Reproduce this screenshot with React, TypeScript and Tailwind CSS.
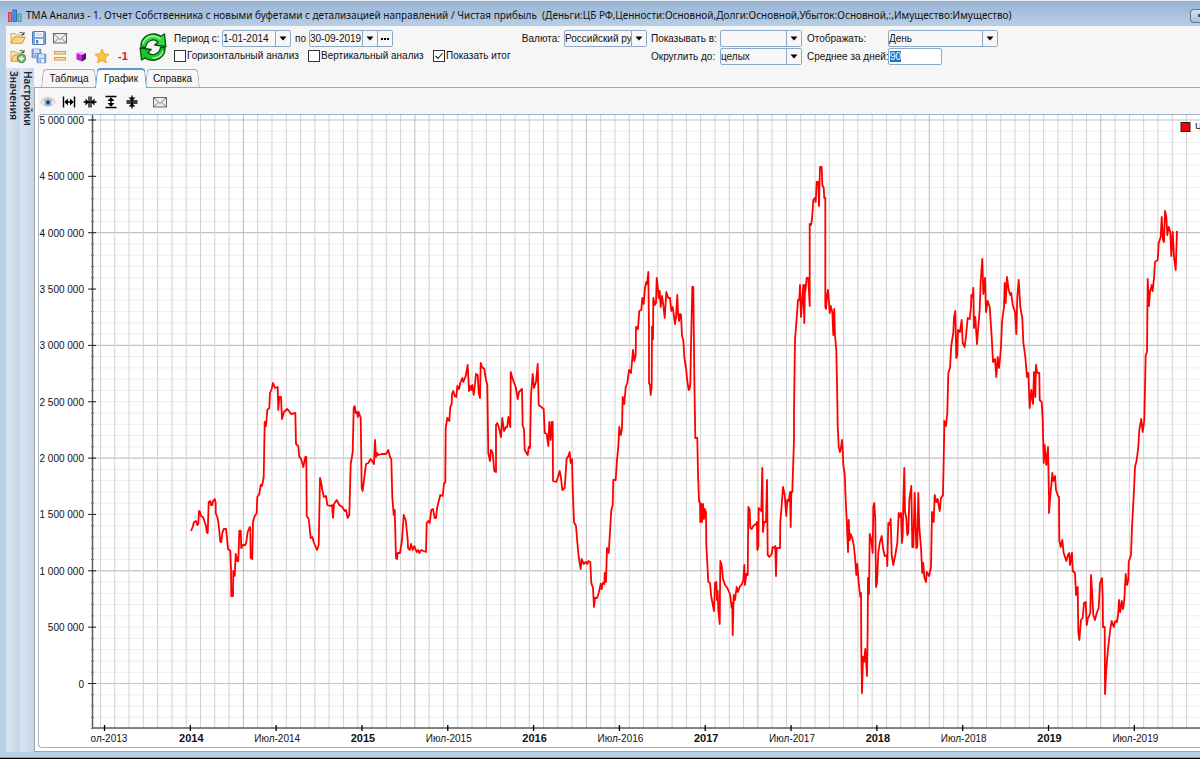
import { useEffect, useRef } from "react";
import type { ReactNode } from "react";

const PROFIT_LINE = `
191,531 192.7,527 194,522 196,521 197.3,525 198.3,524 199,511 200,512 201,516 203,517 204.7,522 206,526 206.7,532 207.7,533
208.7,502 210.3,501 211,505 212.3,505 213,501 214.7,499 215.7,503 215.7,513 217.3,517 218.3,522 219.3,531 220.3,542 221.3,542
222.3,533 223.7,529 226,529 227,538 228,549 230.3,551 231,570 231.3,596 233,596 233.3,571 234.7,576 235.7,554 237.3,561
238.3,561 239.3,531 240.7,531 241.3,548 242.7,545 245.3,545 246.3,542 247.7,532 249.7,527 250.3,528 250.7,558 252.3,559
253,522 254.3,517 256.7,513 257.3,497 259.3,494 260.7,485 262,486 263.7,477 264.7,422 266,426 267.3,410 269.3,408 270,393
271.7,389 273,383 275,388 277.7,387 278.3,410 279.3,397 281,397 282,419 284,412 287,409 289,411 291,414 295.3,413 296,444
298.3,446 299.3,457 300.7,458 301.7,461 303.3,467 305.3,457 306.3,457 306.7,516 308.7,519 310.7,538 312.3,537 314,543 317,550
318.7,545 320,478 321,482 322.3,490 324,497 326,496 327.3,505 330,506 332,505 333,518 334,504 336.7,500 339.3,505 342.3,507
344.7,511 346,510 347.7,518 349.3,515 350.7,464 352.7,452 353.7,408 354.7,406 355.7,413 357,412 357.7,417 358.7,412 360.7,418
361.7,488 362.7,491 364,480 366,464 368.3,463 370.7,459 372.3,461 374,464 375,440 376,457 377.3,453 378.3,455 381.7,454 386,454
388.3,450 390,457 391.3,459 392.3,497 393.7,515 394.7,510 396,558 397,559 397.7,553 400,553 402,540 403.7,515 405.7,520
407.7,540 408,548 409.7,550 411,544 412.7,550 414.3,546 416.7,552 418.3,550 419.3,553 421.3,550 423.7,551 426,552 426.7,523
428.3,521 429.7,523 431.3,510 433,509 434.7,518 436,518 437.3,507 440.3,495 442.7,496 444,484 445.3,482 445.7,428 447.3,418
449.3,421 450.3,407 451.7,404 452,394 453.3,391 454.7,396 456.3,397 457.3,386 459,389 460.3,383 462.3,378 463.3,382 465.7,376
467.7,365 469,391 470.3,386 471.3,390 472.3,385 473.7,395 474.7,387 476,374 477.7,375 478.7,393 480,398 480.7,363 482,367
484.3,369 486,380 487.3,385 488.3,453 490,461 491,450 492.7,453 494.3,471 496,472 496,425 497.3,423 499,428 501,437 502.3,418
504,431 506,427 507.3,427 508.3,417 510.3,427 510.7,372 513,380 515.7,387 517.7,399 519,392 522,389 522.7,426 524,429 524.7,450
527.7,455 528.7,447 530,448 531,395 532.7,374 534,388 536,382 537.7,364 538.7,405 541.3,407 543.7,409 544.7,433 546.7,434
548.3,446 549.3,422 550.7,440 551.7,422 552.7,422 553,481 556.3,482 557.7,478 559.7,471 561,478 562.3,490 564.7,488 566.7,458
568,457 569.7,452 570.7,463 572,459 572.7,488 574,522 576,526 577.3,542 578.7,557 580.7,569 581.7,559 583.7,564 585.7,562
587.3,564 588.3,561 590.3,562 591.3,583 593,588 594,607 595,598 597,598 598.7,593 600.7,584 601.7,589 602.7,583 604.3,584
604.7,573 606,582 607,548 608.7,553 610,532 611.3,510 612.7,505 613.3,480 615.7,480 617,460 618.3,447 619.3,427 620.7,435
622,428 622.7,397 624.3,404 625.7,387 627.3,383 629,370 631,373 633,350 634.3,361 635.7,355 636,327 638,329 639.3,311 641.3,310
642.3,298 643.7,304 645,288 646.3,282 647,284 648.3,272 649,327 649,383 650,385 650.7,395 651.7,387 652,327 653,339 653.3,298
654.7,305 656,303 656.7,278 657.7,286 658.7,298 659.7,291 660.7,307 662,296 663.3,305 664.7,318 666.3,292 668.3,298 670,298
671.3,311 672.7,307 675,324 676,317 677.3,295 678,313 679,321 680,314 681,315 682,336 683.3,340 684.3,357 686,368 687.3,381
688.7,390 689.7,388 690.3,384 691,347 692.3,287 693.3,287 694.3,377 695.3,438 697.3,438 698,473 699,501 700,503 700.3,522
701.3,504 702,522 703,504 704,519 704.7,509 706,512 706.3,545 707.3,563 708.3,582 710,583 711.3,597 712.3,602 714,611 715,583
716.3,582 717,600 717.7,591 718.3,610 719.7,624 720.3,561 721.7,565 723,579 725,585 727.3,588 730,594 731.7,608 732.3,603
732.7,635 733.7,595 735,600 736.7,587 738,592 739.7,587 742,584 743.3,580 744.3,565 745,585 746.3,574 747.7,575 748.3,507
749.7,510 750.3,528 751.7,529 753.3,526 756,524 757,522 757.3,550 758.3,547 758.7,508 761.3,511 762.3,468 763,532 764,522
766,522 767,480 767.7,555 769.3,557 771.7,554 772.7,547 774.7,548 775.3,546 776,576 776.7,548 780,548 780.3,522 781.7,505
783,487 784.7,495 786.3,516 787.3,500 788.7,501 790,492 790.7,527 791.3,492 792.3,492 793,470 794,440 794,412 795,340
796.3,323 798,300 799.3,300 800,285 801,317 802,303 803.3,285 804.3,323 805,285 805.3,292 806.7,278 808.3,278 809.7,306
809.7,224 811,225 812,219 813.3,200 814.7,198 815.7,202 816.7,182 818.3,182 819,206 820,167 821.7,167 822.3,185 823.7,188
824.3,198 825.3,198 825.3,307 826,309 827,295 828,290 829,303 829.7,313 830.7,306 832.3,312 833.3,335 834.3,309 835,335
836.3,350 837,383 837.7,425 838.7,447 840,452 841.3,446 842,440 842.7,450 843.3,465 844.7,474 846,507 846.7,520 848,552
848.7,520 849.7,540 850.7,534 852.3,538 853.7,545 855,557 856.3,575 857.3,564 858.7,583 860.3,597 861,593 861.3,650 862,693
863,657 864,662 865.3,649 867,676 867.7,627 868,578 869,594 869.7,534 871,538 872.7,553 873.3,507 874.3,503 875.3,520 876,587
877,583 878.3,553 879.7,543 881.7,536 883,548 884.7,556 886.7,555 887.3,566 888.3,523 889.7,525 890.7,519 891.7,555 893.3,565
895.3,555 897.3,543 898.7,513 900,517 901,513 902,543 902.7,535 903.3,503 904.3,468 905,512 906.3,518 907.3,535 908.3,533
909.3,500 911.3,486 912.3,547 913.3,547 914.7,493 916.3,548 917.3,547 918.3,493 919.3,527 921,548 922.3,573 923.3,563 924.3,577
926,582 926.7,572 929,576 931,567 932,512 933.7,522 934.7,495 936.3,502 937.7,499 939.7,511 941,498 943,495 944.3,428
944.3,421 946,426 947.3,413 948.3,373 950,368 951.3,345 953.3,333 954,317 955.3,311 956.3,358 957.3,355 958,330 960,332
961.7,320 962.7,343 964.7,347 966.3,333 967.7,318 969.7,319 971,307 971.3,295 972.7,297 973.3,288 974,328 975.3,317 977,344
978.7,322 979.7,310 980.7,281 982.3,259 983.3,294 985,278 986,312 987.7,301 989.7,307 990.7,322 991.7,337 993,362 995,359
996.3,377 997.7,357 999,368 999.7,362 1001,347 1002,322 1004,307 1004.7,283 1005.7,303 1007,277 1008.7,290 1010.3,295
1011.3,293 1012.7,305 1015,312 1016.3,334 1017.3,297 1018.7,280 1020.3,307 1022.3,318 1023.3,342 1025.3,357 1027,377 1028.3,373
1029.7,408 1031.3,390 1033,404 1034,372 1035.3,397 1036,365 1037,372 1038,373 1039.3,373 1039.7,400 1041.7,402 1042.7,420
1043.7,463 1044.7,445 1046.3,465 1048,447 1049,498 1049,513 1050,500 1051.3,485 1052.3,473 1053.3,481 1055,476 1056,490
1058,496 1059,497 1059.3,540 1060.7,547 1062.3,540 1063.7,553 1066.3,561 1068,555 1069.3,553 1070,565 1072,553 1072.7,571
1075,573 1076,595 1077.7,587 1078.3,632 1079.3,640 1081,620 1082.7,618 1084,603 1085.7,602 1086.7,625 1087.7,619 1090.3,613
1091,575 1092,590 1093.3,615 1095,620 1096.7,613 1098.7,608 1100,583 1102,578 1102.7,597 1103,627 1104.7,627 1105,694
1106.3,670 1107.7,652 1109,640 1110.3,629 1111.7,621 1113.7,627 1115.3,621 1117,622 1118.3,613 1119,600 1120.3,612 1121.7,601
1123,609 1124.3,600 1125.7,574 1127,585 1128.3,580 1128.7,562 1131,555 1132,527 1133.7,496 1135,467 1136.7,460 1138.3,447
1139.3,430 1141.3,419 1142.7,432 1144.3,420 1145.7,355 1147,352 1147.7,279 1149,306 1150,292 1151.7,285 1152.7,291 1154,278
1155,262 1157.7,260 1158.7,243 1160.7,237 1161.7,217 1163,240 1164,242 1165,211 1166.3,217 1167.3,235 1168.7,227 1170.3,232
1171.3,256 1172.7,232 1174,257 1175.7,270 1176.7,240 1177,231`;

const Y_LABELS = [
  "5 000 000",
  "4 500 000",
  "4 000 000",
  "3 500 000",
  "3 000 000",
  "2 500 000",
  "2 000 000",
  "1 500 000",
  "1 000 000",
  "500 000",
  "0",
];

const X_LABELS = [
  "ол-2013",
  "2014",
  "Июл-2014",
  "2015",
  "Июл-2015",
  "2016",
  "Июл-2016",
  "2017",
  "Июл-2017",
  "2018",
  "Июл-2018",
  "2019",
  "Июл-2019",
];

const monthLines = Array.from({ length: 77 }, (_, i) => ({
  x: 100.5 + i * 14.29,
  strong: i % 12 === 10,
}));
const valueLines = Array.from({ length: 55 }, (_, i) => ({
  y: 120 + i * 11.27,
  strong: i % 10 === 0,
}));

function Chart() {
  return (
    <svg className="block h-[632px] w-full" role="img" aria-label="Чистая прибыль">
      {/* the drawing keeps window coordinates, shifted into the frame */}
      <g transform="translate(-39 -115)">
        {valueLines.map((line) => (
          <line
            key={line.y}
            x1="92"
            x2="3000"
            y1={line.y}
            y2={line.y}
            stroke={line.strong ? "#c2c2c2" : "#eeeeee"}
            strokeWidth={line.strong ? 1.2 : 1}
          />
        ))}
        {monthLines.map((line) => (
          <line
            key={line.x}
            x1={line.x}
            x2={line.x}
            y1="115"
            y2="728"
            stroke={line.strong ? "#bcbcbc" : "#d2d2d2"}
          />
        ))}
        <path d="M92.500 115V728H3000" fill="none" stroke="#5c5c5c" strokeWidth="1.5" />
        {valueLines.map((line) => (
          <line key={line.y} x1="91" x2="94" y1={line.y} y2={line.y} stroke="#777777" />
        ))}
        {Y_LABELS.map((label, i) => (
          <g key={label}>
            <line x1="88" x2="96" y1={120 + i * 56.35} y2={120 + i * 56.35} stroke="#222222" />
            <text x="84" y={124 + i * 56.35} textAnchor="end" fontSize="10" fill="#111111">
              {label}
            </text>
          </g>
        ))}
        {X_LABELS.map((label, i) => {
          const isYear = i % 2 === 1;
          const x = 104.5 + i * 85.82;
          return (
            <g key={label}>
              <line x1={x} x2={x} y1="725" y2="731" stroke="#000000" strokeWidth="1.3" />
              <text
                x={i === 0 ? 109 : x + 1}
                y="742"
                textAnchor="middle"
                fontSize={isYear ? 11 : 10}
                fontWeight={isYear ? 700 : 400}
                fill="#111111"
              >
                {label}
              </text>
            </g>
          );
        })}
        <polyline
          points={PROFIT_LINE}
          fill="none"
          stroke="#ff0000"
          strokeWidth="1.8"
          strokeLinejoin="round"
        />
        <rect x="1181" y="122.5" width="9" height="9" fill="#fb0007" stroke="#222222" />
        <text x="1195" y="131" fontSize="10" fill="#222222">
          Ч
        </text>
      </g>
    </svg>
  );
}

function Icon({ children }: { children: ReactNode }) {
  return (
    <svg viewBox="0 0 16 16" className="size-4" fill="none" aria-hidden="true">
      {children}
    </svg>
  );
}

function FolderShape() {
  return (
    <>
      <path d="M1 13V3.5h4l1 1.5h6.500v2" fill="#f9e9bb" stroke="#c79a4c" strokeWidth=".8" />
      <path d="M1 13.300 4 7h11.300l-3 6.300z" fill="#fdd581" stroke="#c48a30" strokeWidth=".8" />
      <path d="M9.500 3c2-1.500 3-.5 4 1M14 2v2.500h-2.500" stroke="#333333" strokeWidth=".9" />
    </>
  );
}

function MailIcon() {
  return (
    <Icon>
      <rect x="1.500" y="3.500" width="13" height="9.500" fill="#ededed" stroke="#666666" />
      <path d="m2 4 6 5.500L14 4M2 12.500 6.500 8.500M14 12.500 9.500 8.500" stroke="#777777" strokeWidth=".9" />
    </Icon>
  );
}

function DiskShape() {
  return (
    <>
      <rect x="1.500" y="1.500" width="13" height="13" rx="1" fill="#7ba6e0" stroke="#4a78bd" />
      <rect x="4" y="2" width="8" height="5" fill="#f4f8fd" />
      <path d="M5 3.700h6M5 5.400h6" stroke="#a9c4e8" strokeWidth=".7" />
      <rect x="4" y="9" width="8" height="5" fill="#f4f8fd" />
      <rect x="5.200" y="10" width="2" height="3.500" fill="#4a78bd" />
    </>
  );
}

const toolbarIcons: { label: string; column?: string; icon: ReactNode }[] = [
  {
    label: "Открыть",
    icon: (
      <Icon>
        <FolderShape />
      </Icon>
    ),
  },
  {
    label: "Сохранить",
    icon: (
      <Icon>
        <DiskShape />
      </Icon>
    ),
  },
  { label: "Отправить", icon: <MailIcon /> },
  {
    label: "Добавить",
    column: "col-start-1",
    icon: (
      <Icon>
        <FolderShape />
        <circle cx="11.500" cy="10.500" r="4.200" fill="#6fb968" stroke="#3d7f3c" strokeWidth=".8" />
        <path d="M11.500 8v5M9 10.500h5" stroke="#ffffff" strokeWidth="1.500" />
      </Icon>
    ),
  },
  {
    label: "Сохранить все",
    icon: (
      <Icon>
        <g transform="translate(0 0) scale(.68)">
          <DiskShape />
        </g>
        <g transform="translate(5 5) scale(.68)">
          <DiskShape />
        </g>
      </Icon>
    ),
  },
  {
    label: "Строки",
    icon: (
      <Icon>
        <rect x="2.500" y="3.500" width="11" height="2.500" fill="#fde3a5" stroke="#d79a2b" />
        <rect x="2.500" y="9.500" width="11" height="2.500" fill="#fde3a5" stroke="#d79a2b" />
      </Icon>
    ),
  },
  {
    label: "Куб",
    icon: (
      <Icon>
        <path d="M3.500 5 8 3.500 13 5 9 7z" fill="#e9b4f3" />
        <path d="M3.500 5 9 7v6.500l-5.500-2z" fill="#c61fe0" />
        <path d="M9 7l4-2v6l-4 2.500z" fill="#5d0a73" />
      </Icon>
    ),
  },
  {
    label: "Избранное",
    icon: (
      <Icon>
        <path
          d="m8 1 2.100 4.700 5 .6-3.700 3.500 1 5.200L8 12.500 3.600 15l1-5.200L.9 6.300l5-.6z"
          fill="#f9c340"
          stroke="#dfa12a"
          strokeWidth=".8"
        />
      </Icon>
    ),
  },
  { label: "Минус один", icon: <span className="text-[11px] leading-4 font-bold text-[#ee1111]">-1</span> },
];

function RefreshIcon() {
  return (
    <svg viewBox="0 0 28 30" className="h-[30px] w-7" aria-hidden="true">
      <g stroke="#064d0c" strokeWidth="1.300" strokeLinejoin="round">
        <path
          d="M2 15C1.500 7 8 1.500 15.500 2c2.500.200 4.500 1 6.200 2.300L25.500 2l1.300 12.500-11-1.500 3.200-3c-2-2-5-2.500-7.500-1.500C8.500 9.700 7 12 6.500 15.500z"
          fill="#2fdc3e"
        />
        <path
          d="M26 15.500c.5 8-6 13.200-13.500 12.700-2.500-.200-4.500-1-6.200-2.300L2.500 28 1.200 16l11 1.500-3.200 3c2 2 5 2.500 7.500 1.500 3-1.200 4.500-3.500 5-6.500z"
          fill="#1cc72c"
        />
      </g>
      <path
        d="M4 11.500C5.500 6.500 10 3.700 15 4.200c2.500.200 4.500 1 6.500 2.800M24 19c-1.500 4.500-5.500 7.300-10.500 7"
        fill="none"
        stroke="#9df59c"
        strokeWidth="1.500"
      />
    </svg>
  );
}

function DownArrow() {
  return (
    <svg viewBox="0 0 8 5" className="h-[5px] w-2" aria-hidden="true">
      <path d="M.5.500h7L4 4.500z" fill="#000000" />
    </svg>
  );
}

function SelectBox({ id, value, width }: { id: string; value: string; width: string }) {
  return (
    <div className={`relative h-[17px] shrink-0 rounded-xs border border-[#8ea9c6] bg-[#f7f7f7] ${width}`}>
      <select id={id} className="block h-full w-full appearance-none overflow-hidden pr-[15px] leading-[15px] outline-none">
        <option>{value}</option>
      </select>
      <span className="pointer-events-none absolute inset-y-0 right-0 flex w-[15px] items-center justify-center border-l border-[#8ea9c6] bg-[#f7f7f7]">
        <DownArrow />
      </span>
    </div>
  );
}

function DateBox({ id, value, more }: { id: string; value: string; more?: boolean }) {
  return (
    <div className="flex h-[17px] rounded-xs border border-[#8ea9c6] bg-[#f7f7f7]">
      <input id={id} defaultValue={value} className="w-[52px] outline-none" />
      <button aria-label="Календарь" className="flex w-[15px] items-center justify-center border-l border-[#8ea9c6]">
        <DownArrow />
      </button>
      {more && (
        <button
          aria-label="Выбрать период"
          className="flex w-[15px] items-center justify-center gap-px border-l border-[#8ea9c6]"
        >
          <span className="size-[2px] bg-black" />
          <span className="size-[2px] bg-black" />
          <span className="size-[2px] bg-black" />
        </button>
      )}
    </div>
  );
}

function Check({ label, width, checked }: { label: string; width?: string; checked?: boolean }) {
  return (
    <label className={`flex items-center gap-px whitespace-nowrap ${width ?? ""}`}>
      <span className="relative size-3 shrink-0">
        <input
          type="checkbox"
          defaultChecked={checked}
          className="peer block size-3 appearance-none border border-[#333333] bg-white"
        />
        <svg viewBox="0 0 12 12" className="pointer-events-none absolute inset-0 hidden peer-checked:block" aria-hidden="true">
          <path d="m2.500 6 2.500 2.500L9.500 3" fill="none" stroke="#222222" strokeWidth="1.100" />
        </svg>
      </span>
      {label}
    </label>
  );
}

function Toolbar() {
  const daysRef = useRef<HTMLInputElement>(null);

  useEffect(() => {
    daysRef.current?.focus();
    daysRef.current?.select();
  }, []);

  return (
    <div className="flex h-[42px] items-start bg-[#f6f6f6] pt-1 pl-1">
      <div className="grid shrink-0 grid-cols-[repeat(6,16px)] gap-x-[5px] gap-y-[2px]">
        {toolbarIcons.map((item) => (
          <button key={item.label} aria-label={item.label} className={`size-4 ${item.column ?? ""}`}>
            {item.icon}
          </button>
        ))}
      </div>
      <button aria-label="Обновить" className="mt-[2px] ml-2 shrink-0">
        <RefreshIcon />
      </button>

      <div className="ml-[7px] w-[346px] shrink-0">
        <div className="flex h-[17px] items-center">
          <label htmlFor="from" className="w-12">
            Период с:
          </label>
          <DateBox id="from" value="1-01-2014" />
          <label htmlFor="to" className="w-[18px] pl-1">
            по
          </label>
          <DateBox id="to" value="30-09-2019" more />
        </div>
        <div className="flex h-[17px] items-center">
          <Check label="Горизонтальный анализ" width="w-[134px]" />
          <Check label="Вертикальный анализ" width="w-[125px]" />
          <Check label="Показать итог" checked />
        </div>
      </div>

      <div className="flex items-center">
        <label htmlFor="currency" className="w-11 text-right whitespace-nowrap pr-1">
          Валюта:
        </label>
        <SelectBox id="currency" value="Российский рубль" width="w-[83px]" />
      </div>

      <div className="ml-1 grid grid-cols-[69px_83px] items-center gap-y-px">
        <label htmlFor="units" className="whitespace-nowrap">
          Показывать в:
        </label>
        <SelectBox id="units" value="" width="w-[82px]" />
        <label htmlFor="round" className="whitespace-nowrap">
          Округлить до:
        </label>
        <SelectBox id="round" value="целых" width="w-[82px]" />
      </div>

      <div className="ml-1 grid grid-cols-[81px_110px] items-center gap-y-px">
        <label htmlFor="step">Отображать:</label>
        <SelectBox id="step" value="День" width="w-[110px]" />
        <label htmlFor="days" className="whitespace-nowrap">
          Среднее за дней:
        </label>
        <input
          id="days"
          ref={daysRef}
          defaultValue="90"
          className="h-[17px] w-[54px] rounded-xs border border-[#8ea9c6] bg-white pl-px caret-transparent outline-none selection:bg-[#0b78d7] selection:text-white"
        />
      </div>
    </div>
  );
}

function Tab({ label, width, active }: { label: string; width: string; active?: boolean }) {
  const edge = active
    ? "z-10 -mb-px h-5 before:border-t-2 before:border-[#5b96d6] before:bg-[#fcfcfc] after:border-t-2 after:border-[#5b96d6] after:bg-[#fcfcfc]"
    : "h-[18px] before:border-[#a9a9a9] before:bg-[#f6f6f6] after:border-[#a9a9a9] after:bg-[#f6f6f6]";

  return (
    <button
      role="tab"
      aria-selected={!!active}
      className={`relative before:absolute before:inset-y-0 before:left-0 before:w-3/5 before:-skew-x-6 before:rounded-tl-sm before:border-t before:border-l after:absolute after:inset-y-0 after:right-0 after:w-3/5 after:skew-x-6 after:rounded-tr-sm after:border-t after:border-r ${edge} ${width}`}
    >
      <span className="relative z-10">{label}</span>
    </button>
  );
}

const chartTools: { label: string; icon: ReactNode }[] = [
  {
    label: "Вид",
    icon: (
      <Icon>
        <path d="M1 8.500C4 4 12 4 15 8.500 12 13 4 13 1 8.500z" fill="#fdf6f0" stroke="#e0b49c" />
        <circle cx="8" cy="8.300" r="3.600" fill="#78a9e3" />
        <circle cx="8" cy="8.300" r="1.600" fill="#16315c" />
        <path d="M1.500 6.500C5 2.500 11 2.500 14.500 6.500" stroke="#e3b79f" />
      </Icon>
    ),
  },
  {
    label: "Растянуть по горизонтали",
    icon: (
      <Icon>
        <path d="M2.500 2.500v11M13.500 2.500v11M4 8h8" stroke="#000000" strokeWidth="1.400" />
        <path d="M7 4.500v7L3.300 8zM9 4.500v7L12.700 8z" fill="#000000" />
      </Icon>
    ),
  },
  {
    label: "Сжать по горизонтали",
    icon: (
      <Icon>
        <path d="M7 2.500v11M9 2.500v11M1.500 8h13" stroke="#000000" strokeWidth="1.300" />
        <path d="M3.500 4.500v7L7 8zM12.500 4.500v7L9 8z" fill="#000000" />
      </Icon>
    ),
  },
  {
    label: "Растянуть по вертикали",
    icon: (
      <Icon>
        <path d="M2.500 2.500h11M2.500 13.500h11M8 4v8" stroke="#000000" strokeWidth="1.400" />
        <path d="M4.500 7h7L8 3.300zM4.500 9h7L8 12.700z" fill="#000000" />
      </Icon>
    ),
  },
  {
    label: "Сжать по вертикали",
    icon: (
      <Icon>
        <path d="M2.500 7h11M2.500 9h11M8 1.500v13" stroke="#000000" strokeWidth="1.300" />
        <path d="M4.500 3.500h7L8 7zM4.500 12.500h7L8 9z" fill="#000000" />
      </Icon>
    ),
  },
];

function SidePanel() {
  return (
    <div className="flex w-7 shrink-0 text-[10px] font-semibold text-[#1a2433] [font-family:'Noto_Sans',sans-serif]">
      {["Значения", "Настройки"].map((label) => (
        <button
          key={label}
          className="flex w-[14px] items-center justify-start bg-linear-to-r from-[#dae5f1] to-[#c6d5e6] pt-[3px] pl-[2px] leading-[12px] [writing-mode:vertical-rl]"
        >
          {label}
        </button>
      ))}
    </div>
  );
}

export default function App() {
  return (
    <div className="flex min-h-screen flex-col overflow-hidden border-b border-black bg-[#b9d0e9] text-[10px] leading-[15px] text-[#111111] [font-family:'Liberation_Sans',sans-serif]">
      <header className="flex h-[26px] items-center border-t border-[#e6edf5] bg-linear-to-b from-[#98b4d2] to-[#b8cfe8] pt-1 pl-2">
        <svg viewBox="0 0 14 14" className="size-[14px] shrink-0" aria-hidden="true">
          <rect x=".5" y="3.500" width="3" height="9" fill="#ef6a78" stroke="#c8303f" strokeWidth=".8" />
          <rect x="5" y="1" width="3.500" height="11.500" fill="#4e8ff0" stroke="#1f56b8" strokeWidth=".8" />
          <rect x="10" y="5" width="3" height="7.500" fill="#7fc7a8" stroke="#2f8b75" strokeWidth=".8" />
        </svg>
        <h1 className="ml-1 flex-1 truncate text-[10px] whitespace-pre [font-family:'Noto_Sans',sans-serif]">
          {
            "ТМА Анализ - 1. Отчет Собственника с новыми буфетами с детализацией направлений / Чистая прибыль  (Деньги:ЦБ РФ,Ценности:Основной,Долги:Основной,Убыток:Основной,:,Имущество:Имущество)"
          }
        </h1>
        <button
          aria-label="Свернуть"
          className="flex h-[14px] w-[10px] items-center justify-end rounded-l-sm border border-r-0 border-[#5f7690] bg-linear-to-b from-[#d3e0ee] to-[#a9c0da]"
        >
          <span className="h-[3px] w-[2px] bg-[#44546a]" />
        </button>
      </header>

      <div className="ml-[6px] flex-1 bg-[#f6f6f6]">
        <Toolbar />
        <div className="flex">
          <SidePanel />
          <main className="min-w-0 flex-1">
            <div role="tablist" className="flex h-[19px] items-end pl-2">
              <Tab label="Таблица" width="w-[54px]" />
              <Tab label="График" width="w-[50px]" active />
              <Tab label="Справка" width="w-[53px]" />
            </div>
            <section className="border-y border-l border-[#a5a5a5] bg-white pb-[3px] pl-[3px]">
              <div className="flex h-[26px] items-center gap-[5px] bg-[#f6f6f6] pt-[2px] pl-[2px]">
                {chartTools.map((tool) => (
                  <button key={tool.label} aria-label={tool.label}>
                    {tool.icon}
                  </button>
                ))}
                <button aria-label="Отправить график" className="ml-[7px]">
                  <MailIcon />
                </button>
              </div>
              <div className="rounded-l-sm border-y border-l border-[#9fb3c8] bg-white">
                <Chart />
              </div>
            </section>
          </main>
        </div>
      </div>
      <div className="h-[6px] border-b border-[#3fc0d8]" />
    </div>
  );
}
